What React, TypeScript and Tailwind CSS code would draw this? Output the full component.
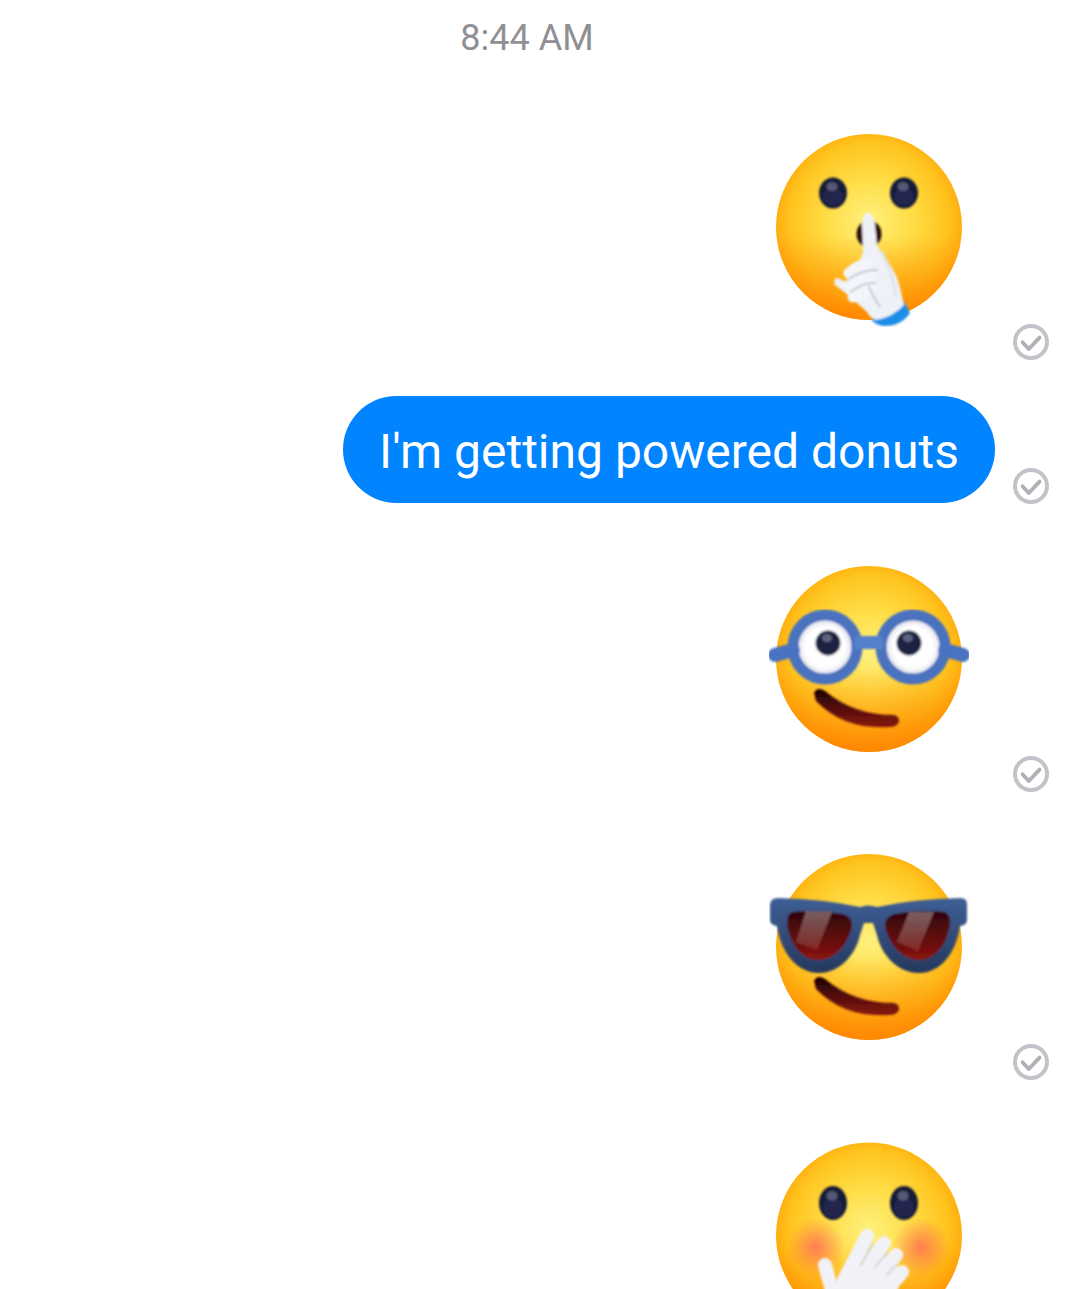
const Check = () => (
  <svg width="36" height="36" viewBox="0 0 36 36" className="shrink-0" fill="none">
    <circle cx="18" cy="18" r="16" stroke="#c2c3c9" strokeWidth="4" />
    <path d="M9.5 18.2 L15.8 25 L26.5 13.6" stroke="#b0b1b7" strokeWidth="3.8" strokeLinecap="round" strokeLinejoin="round" />
  </svg>
);

const Face = ({ id, cy = 100 }: { id: string; cy?: number }) => (
  <>
    <defs>
      <radialGradient id={id} gradientUnits="userSpaceOnUse" cx="100" cy={cy - 6} r="98">
        <stop offset="0" stopColor="#FFF07E" />
        <stop offset="0.42" stopColor="#FFDE48" />
        <stop offset="0.8" stopColor="#FFC41E" />
        <stop offset="1" stopColor="#FFA60A" />
      </radialGradient>
      <linearGradient id={`${id}-b`} x1="0" y1="0" x2="0" y2="1">
        <stop offset="0.55" stopColor="#FF8A00" stopOpacity="0" />
        <stop offset="1" stopColor="#FF8200" stopOpacity="0.85" />
      </linearGradient>
      <filter id={`${id}-s`} x="-5%" y="-5%" width="110%" height="110%">
        <feGaussianBlur stdDeviation="0.8" />
      </filter>
    </defs>
    <circle cx="100" cy={cy} r="93" fill={`url(#${id})`} />
    <circle cx="100" cy={cy} r="93" fill={`url(#${id}-b)`} />
  </>
);

const Eye = ({ cx, cy, rx, ry }: { cx: number; cy: number; rx: number; ry: number }) => (
  <>
    <ellipse cx={cx} cy={cy} rx={rx} ry={ry} fill="#171b38" />
    <ellipse cx={cx} cy={cy + ry * 0.25} rx={rx * 0.7} ry={ry * 0.58} fill="#232850" />
    <ellipse cx={cx - 1} cy={cy - ry * 0.42} rx={rx * 0.4} ry={ry * 0.28} fill="#6f7290" opacity="0.7" />
  </>
);

const Smirk = ({ id }: { id: string }) => (
  <>
    <defs>
      <linearGradient id={id} x1="0" y1="0" x2="0" y2="1">
        <stop offset="0" stopColor="#1e0303" />
        <stop offset="0.55" stopColor="#5a0d0e" />
        <stop offset="1" stopColor="#861a12" />
      </linearGradient>
    </defs>
    <path d="M45 134 Q48 127 56 132 Q85 156 124 156 Q131 157 130 163 Q128 168 120 168 Q75 171 47 142 Z" fill={`url(#${id})`} />
  </>
);

const Shush = () => (
  <svg width="200" height="200" viewBox="0 0 200 200" className="shrink-0 mb-[33px]">
    <Face id="f1" />
    <g filter="url(#f1-s)">
      <Eye cx={64} cy={66} rx={14} ry={15.5} />
      <Eye cx={135} cy={66} rx={14} ry={15.5} />
      <ellipse cx="100" cy="107" rx="12.5" ry="13.5" fill="#2e0808" />
      <path d="M135 174 L141 186 Q132 199 116 199 Q107 199 102 192 Q122 190 135 174 Z" fill="#1f8ee8" />
      <path d="M99 85 Q105 88 106 98 L108 118 Q112 128 121 138 Q129 150 131 161 L135 178 Q124 190 107 193 Q100 190 98 185 L79 168 L66 158 Q64 152 68 151 L78 155 L78 141 Q84 135 91 133 L94 125 L93 98 Q93 87 99 85 Z" fill="#eef1f7" />
      <path d="M80 146 L98 136 M80 159 L100 149 M84 170 L102 162" stroke="#f3f5fa" strokeWidth="11" strokeLinecap="round" />
      <path d="M80 152 Q92 143 108 143 M82 165 Q92 156 106 156 M100 160 L106 172 L111 180" fill="none" stroke="#c3c9d6" strokeWidth="2" strokeLinecap="round" />
      <path d="M112 124 Q124 145 127 170" fill="none" stroke="#dfe3ec" strokeWidth="3" />
    </g>
  </svg>
);

const Nerd = () => (
  <svg width="200" height="200" viewBox="0 0 200 200" className="shrink-0 mb-[33px]">
    <defs>
      <radialGradient id="eyeW">
        <stop offset="0.65" stopColor="#ffffff" />
        <stop offset="1" stopColor="#cfd2e2" />
      </radialGradient>
    </defs>
    <Face id="f2" />
    <g filter="url(#f2-s)">
      <Smirk id="m2" />
      <circle cx="56" cy="88" r="31" fill="url(#eyeW)" />
      <circle cx="144" cy="88" r="31" fill="url(#eyeW)" />
      <circle cx="59" cy="84" r="12.5" fill="#1d2342" />
      <circle cx="140" cy="84" r="12.5" fill="#1d2342" />
      <ellipse cx="58" cy="79" rx="5" ry="4" fill="#70748f" opacity="0.8" />
      <ellipse cx="139" cy="79" rx="5" ry="4" fill="#70748f" opacity="0.8" />
      <circle cx="56" cy="88" r="32" fill="none" stroke="#4c72be" strokeWidth="11" />
      <circle cx="144" cy="88" r="32" fill="none" stroke="#4c72be" strokeWidth="11" />
      <rect x="86" y="77" width="28" height="13" fill="#5480cc" />
      <path d="M6 96 L24 91 M194 96 L176 91" stroke="#4a72c0" strokeWidth="14" strokeLinecap="round" />
    </g>
  </svg>
);

const Shades = () => (
  <svg width="200" height="200" viewBox="0 0 200 200" className="shrink-0 mb-[33px]">
    <defs>
      <linearGradient id="lens" x1="0" y1="0" x2="0" y2="1">
        <stop offset="0" stopColor="#2e0408" />
        <stop offset="1" stopColor="#8a1410" />
      </linearGradient>
      <linearGradient id="frame" x1="0" y1="0" x2="0" y2="1">
        <stop offset="0" stopColor="#3f5f96" />
        <stop offset="1" stopColor="#26385e" />
      </linearGradient>
      <linearGradient id="shine" x1="0" y1="0" x2="0" y2="1">
        <stop offset="0" stopColor="#ffffff" stopOpacity="0.36" />
        <stop offset="1" stopColor="#ffffff" stopOpacity="0.1" />
      </linearGradient>
    </defs>
    <Face id="f3" />
    <g filter="url(#f3-s)">
      <Smirk id="m3" />
      <path d="M1 57 Q2 51 9 51 Q55 52 91 60 Q99 57 108 60 Q145 52 191 51 Q198 51 198 57 L198 73 Q198 78 191 79 C187 107 171 126 150 126 C128 126 112 107 108 88 L104 76 L95 76 L91 88 C87 107 71 126 50 126 C29 126 12 107 8 79 Q1 78 1 73 Z" fill="url(#frame)" />
      <path d="M23 65 Q50 62 74 67 Q84 70 83 80 C79 97 66 113 49 113 C33 113 21 97 18 78 Q17 68 23 65 Z" fill="url(#lens)" />
      <path d="M176 65 Q149 62 125 67 Q115 70 116 80 C120 97 133 113 150 113 C166 113 178 97 181 78 Q182 68 176 65 Z" fill="url(#lens)" />
      <path d="M37 64 L63 65 L48 103 L27 95 Z" fill="url(#shine)" />
      <path d="M140 65 L165 65 L149 104 L128 95 Z" fill="url(#shine)" />
    </g>
  </svg>
);

const Hush = () => (
  <svg width="200" height="200" viewBox="0 0 200 200" className="shrink-0 mb-[33px]">
    <defs>
      <radialGradient id="blush">
        <stop offset="0" stopColor="#FF6F55" stopOpacity="0.85" />
        <stop offset="1" stopColor="#FF6F55" stopOpacity="0" />
      </radialGradient>
    </defs>
    <Face id="f4" cy={100.5} />
    <circle cx="47" cy="112" r="29" fill="url(#blush)" />
    <circle cx="152" cy="112" r="29" fill="url(#blush)" />
    <g filter="url(#f4-s)">
      <Eye cx={64} cy={68} rx={14} ry={17} />
      <Eye cx={135} cy={68} rx={14} ry={17} />
      <path d="M62 165 L72 136 L92 116 L124 124 L133 140 L124 170 Z" fill="#f1f2f7" />
      <path d="M62 152 L56 130 M75 145 L98 101 M90 145 L115 108 M104 150 L127 120 M118 155 L133 137" stroke="#f1f2f7" strokeWidth="14" strokeLinecap="round" fill="none" />
      <path d="M92 130 L104 108 M106 132 L118 118 M118 140 L127 130" stroke="#d4d0cc" strokeWidth="1.8" strokeLinecap="round" />
    </g>
  </svg>
);

export default function App() {
  return (
    <div className="h-[1289px] w-[1066px] overflow-hidden bg-white pr-[17px] font-['Roboto',sans-serif]">
      <div className="flex h-[127px] justify-center pl-[5px] pt-[17px]">
        <span className="text-[36px] leading-[42px] text-[#909094]">8:44 AM</span>
      </div>
      <div className="flex items-end justify-end gap-[44px]">
        <Shush />
        <Check />
      </div>
      <div className="mt-[36px] flex items-end justify-end gap-[18px]">
        <div className="mb-[1px] flex h-[107px] w-[652px] items-center justify-center rounded-full bg-[#0084ff] pt-[4px] text-[48px] leading-none text-white">
          I'm getting powered donuts
        </div>
        <Check />
      </div>
      <div className="mt-[55px] flex items-end justify-end gap-[44px]">
        <Nerd />
        <Check />
      </div>
      <div className="mt-[55px] flex items-end justify-end gap-[44px]">
        <Shades />
        <Check />
      </div>
      <div className="mt-[55px] flex items-end justify-end gap-[44px]">
        <Hush />
        <div className="w-[36px]" />
      </div>
    </div>
  );
}
